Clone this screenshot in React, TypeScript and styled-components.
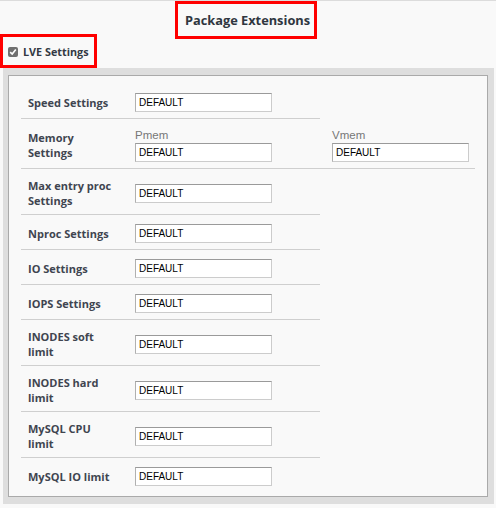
import React from "react"
import styled, { createGlobalStyle } from "styled-components"

const GlobalStyle = createGlobalStyle`
  html, body {
    margin: 0;
    padding: 0;
    background: #f9f9f9;
  }
  body {
    font-family: "Open Sans", "Liberation Sans", sans-serif;
  }
`

type Setting = {
  label: string
  extra?: { first: string; second: string }
}

const SETTINGS: Setting[] = [
  { label: "Speed Settings" },
  { label: "Memory Settings", extra: { first: "Pmem", second: "Vmem" } },
  { label: "Max entry proc Settings" },
  { label: "Nproc Settings" },
  { label: "IO Settings" },
  { label: "IOPS Settings" },
  { label: "INODES soft limit" },
  { label: "INODES hard limit" },
  { label: "MySQL CPU limit" },
  { label: "MySQL IO limit" },
]

const Page = styled.div`
  width: 496px;
  height: 508px;
  box-sizing: border-box;
  border-top: 1px solid #dcdcdc;
  overflow: hidden;
`

const Header = styled.div`
  display: flex;
  justify-content: center;
  padding-right: 4px;
`

const Title = styled.h2`
  margin: 0 0 -5px;
  border: 3px solid #ff0000;
  padding: 7px 4px 7px 7px;
  font-size: 12.8px;
  line-height: 18px;
  font-weight: 700;
  color: #2f3640;
`

const Highlight = styled.label`
  display: inline-flex;
  align-items: center;
  gap: 5px;
  height: 27px;
  border: 3px solid #ff0000;
  padding: 1px 5px 0 5px;
  font-size: 10.8px;
  font-weight: 700;
  color: #333a44;
`

const Check = styled.span`
  display: inline-flex;
  align-items: center;
  justify-content: center;
  width: 10px;
  height: 10px;
  border-radius: 2px;
  background: #707070;
`

const Panel = styled.div`
  margin: 0 2px 0 3px;
  background: #dedede;
  padding: 7px 6px 7px 5px;
`

const Inner = styled.div`
  border: 1px solid #aaaaaa;
  background: #f9f9f9;
  padding: 8px 0 4px 12px;
`

const Row = styled.div<{ $last: boolean }>`
  display: flex;
  width: max-content;
  border-bottom: ${(p) => (p.$last ? "none" : "1px solid #cfcfcf")};
`

const LabelCell = styled.div`
  box-sizing: border-box;
  width: 114px;
  padding: 9px 19px 6px 7px;
  display: flex;
  align-items: center;
  font-size: 11px;
  line-height: 15px;
  font-weight: 700;
  color: #3f4550;
`

const ValueCell = styled.div<{ $wide: boolean }>`
  box-sizing: border-box;
  width: ${(p) => (p.$wide ? 155 : 185)}px;
  padding: 9px 0 6px ${(p) => (p.$wide ? 12 : 0)}px;
  display: flex;
  flex-direction: column;
  justify-content: center;
`

const SubLabel = styled.span`
  font-family: "Liberation Sans", Arial, sans-serif;
  font-size: 11.5px;
  line-height: 15px;
  color: #777;
`

const Input = styled.input`
  box-sizing: border-box;
  width: 137px;
  height: 19px;
  margin: 0;
  padding: 0 3px;
  background: #fff;
  border: 1px solid #cccccc;
  border-top-color: #9a9a9a;
  border-left-color: #b0b0b0;
  font-family: "Liberation Sans", Arial, sans-serif;
  font-size: 10px;
  color: #000;
  outline: none;
`

const Field: React.FC<{ caption?: string; wide?: boolean }> = ({ caption, wide = false }) => (
  <ValueCell $wide={wide}>
    {caption && <SubLabel>{caption}</SubLabel>}
    <Input defaultValue="DEFAULT" />
  </ValueCell>
)

export default function App() {
  return (
    <Page>
      <GlobalStyle />
      <Header>
        <Title>Package Extensions</Title>
      </Header>
      <Highlight>
        <Check>
          <svg width="8" height="8" viewBox="0 0 8 8">
            <path d="M1.2 4.2 L3.2 6.1 L6.8 1.6" fill="none" stroke="#fff" strokeWidth="1.6" />
          </svg>
        </Check>
        LVE Settings
      </Highlight>
      <Panel>
        <Inner>
          {SETTINGS.map((s, i) => (
            <Row key={s.label} $last={i === SETTINGS.length - 1}>
              <LabelCell>{s.label}</LabelCell>
              <Field caption={s.extra?.first} />
              {s.extra && <Field caption={s.extra.second} wide />}
            </Row>
          ))}
        </Inner>
      </Panel>
    </Page>
  )
}
